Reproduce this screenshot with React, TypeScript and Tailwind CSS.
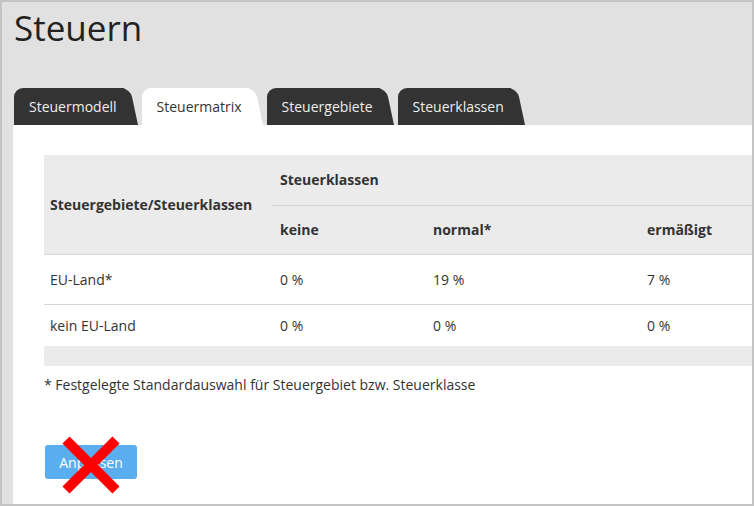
const tabs = [
  { label: "Steuermodell", active: false },
  { label: "Steuermatrix", active: true },
  { label: "Steuergebiete", active: false },
  { label: "Steuerklassen", active: false },
];

function Tab({ label, active }: { label: string; active: boolean }) {
  const bg = active ? "bg-white" : "bg-[#333333]";
  return (
    <div className="relative h-[37px] pl-[15px] pr-[21px] flex items-center">
      <div className={`absolute inset-y-0 left-0 right-[14px] rounded-tl-[9px] ${bg}`} />
      <div className={`absolute inset-y-0 right-0 w-[26px] origin-bottom skew-x-[12deg] rounded-tr-[9px] ${bg}`} />
      <span className={`relative text-[14px] ${active ? "text-[#333]" : "text-[#eeeeee]"}`}>
        {label}
      </span>
    </div>
  );
}

export default function App() {
  const rows = [
    { name: "EU-Land*", values: ["0 %", "19 %", "7 %"] },
    { name: "kein EU-Land", values: ["0 %", "0 %", "0 %"] },
  ];

  return (
    <div
      className="w-[754px] h-[506px] border-2 border-[#c4c4c4] bg-[#e1e1e1] flex flex-col overflow-hidden text-[#333]"
      style={{ fontFamily: '"Open Sans", "Liberation Sans", sans-serif' }}
    >
      {/* Header */}
      <div className="pl-[12px] h-[123px] flex flex-col">
        <h1 className="text-[35px] leading-[40px] mt-[6px] text-[#222]">Steuern</h1>

        {/* Tabs */}
        <div className="mt-auto flex items-end gap-[4px]">
          {tabs.map((t) => (
            <Tab key={t.label} label={t.label} active={t.active} />
          ))}
        </div>
      </div>

      {/* Content */}
      <div className="ml-[11px] flex-1 bg-white pl-[31px] pt-[30px] overflow-hidden">
        <table className="w-[740px] border-collapse text-[14px]">
          <thead className="bg-[#ebebeb] text-[#333]">
            <tr className="h-[50px]">
              <th rowSpan={2} className="w-[228px] text-left pl-[6px] border-b border-[#d6d6d6] font-bold">
                Steuergebiete/Steuerklassen
              </th>
              <th colSpan={3} className="text-left pl-[8px] border-b border-[#d6d6d6] font-bold">
                Steuerklassen
              </th>
            </tr>
            <tr className="h-[49px]">
              <th className="w-[155px] text-left pl-[8px] border-b border-[#d6d6d6] font-bold">keine</th>
              <th className="w-[213px] text-left pl-[6px] border-b border-[#d6d6d6] font-bold">normal*</th>
              <th className="text-left pl-[7px] border-b border-[#d6d6d6] font-bold">ermäßigt</th>
            </tr>
          </thead>
          <tbody>
            {rows.map((r, i) => (
              <tr key={r.name} className={i === 0 ? "h-[50px] border-b border-[#d6d6d6]" : "h-[42px]"}>
                <td className="pl-[6px]">{r.name}</td>
                <td className="pl-[8px]">{r.values[0]}</td>
                <td className="pl-[6px]">{r.values[1]}</td>
                <td className="pl-[7px]">{r.values[2]}</td>
              </tr>
            ))}
          </tbody>
          <tfoot>
            <tr className="h-[20px] bg-[#ebebeb]">
              <td colSpan={4} />
            </tr>
          </tfoot>
        </table>

        <p className="mt-[9px] text-[14px] leading-[20px]">
          * Festgelegte Standardauswahl für Steuergebiet bzw. Steuerklasse
        </p>

        {/* Button */}
        <div className="relative mt-[50px] ml-[1px] w-[92px]">
          <button className="w-[92px] h-[34px] rounded-[3px] bg-[#58aeee] text-white text-[14px]">
            Anpassen
          </button>
          <svg
            className="absolute left-[16px] top-[-9px]"
            width="60"
            height="58"
            viewBox="0 0 60 58"
          >
            <path d="M5 4 L55 54 M55 4 L5 54" stroke="#ff0000" strokeWidth="10" />
          </svg>
        </div>
      </div>
    </div>
  );
}
